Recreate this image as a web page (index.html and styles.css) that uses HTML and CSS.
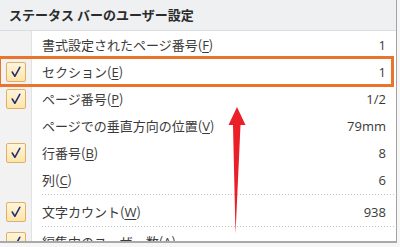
FILE: index.html
```html
<!DOCTYPE html>
<html lang="ja">
<head>
<meta charset="UTF-8">
<meta name="viewport" content="width=device-width, initial-scale=1.0">
<title>ステータス バーのユーザー設定</title>
<link rel="stylesheet" href="styles.css">
</head>
<body>
<div class="menu">
  <div class="title">ステータス バーのユーザー設定</div>
  <ul class="items">
    <li class="item">
      <span class="gutter"></span>
      <span class="label">書式設定されたページ番号(<u>F</u>)</span>
      <span class="value">1</span>
    </li>
    <li class="item marked">
      <span class="gutter"><span class="check"><svg viewBox="0 0 19 19"><path d="M5.5 9.5 L8.3 14 L13.5 4.5"/></svg></span></span>
      <span class="label">セクション(<u>E</u>)</span>
      <span class="value">1</span>
    </li>
    <li class="item">
      <span class="gutter"><span class="check"><svg viewBox="0 0 19 19"><path d="M5.5 9.5 L8.3 14 L13.5 4.5"/></svg></span></span>
      <span class="label">ページ番号(<u>P</u>)</span>
      <span class="value">1/2</span>
    </li>
    <li class="item">
      <span class="gutter"></span>
      <span class="label">ページでの垂直方向の位置(<u>V</u>)</span>
      <span class="value">79mm</span>
    </li>
    <li class="item">
      <span class="gutter"><span class="check"><svg viewBox="0 0 19 19"><path d="M5.5 9.5 L8.3 14 L13.5 4.5"/></svg></span></span>
      <span class="label">行番号(<u>B</u>)</span>
      <span class="value">8</span>
    </li>
    <li class="item">
      <span class="gutter"></span>
      <span class="label">列(<u>C</u>)</span>
      <span class="value">6</span>
    </li>
    <li class="sep"></li>
    <li class="item">
      <span class="gutter"><span class="check"><svg viewBox="0 0 19 19"><path d="M5.5 9.5 L8.3 14 L13.5 4.5"/></svg></span></span>
      <span class="label">文字カウント(<u>W</u>)</span>
      <span class="value">938</span>
    </li>
    <li class="sep short"></li>
    <li class="item">
      <span class="gutter"><span class="check"><svg viewBox="0 0 19 19"><path d="M5.5 9.5 L8.3 14 L13.5 4.5"/></svg></span></span>
      <span class="label">編集中のユーザー数(<u>A</u>)</span>
      <span class="value"></span>
    </li>
  </ul>
</div>
<svg class="arrow" width="400" height="247" viewBox="0 0 400 247">
  <path d="M237 107 L245.5 125 L240.5 125 L235.5 234 L233 125 L228.5 125 Z" fill="#ea1f27"/>
</svg>
</body>
</html>
```

FILE: styles.css
```css
body {
  margin: 0;
  background: #f6f6f6;
  font-family: "Open Sans", "Noto Sans CJK JP", sans-serif;
  font-size: 13px;
  color: #3a3a3a;
  position: relative;
  height: 247px;
  overflow: hidden;
}
.menu {
  width: 396px;
  height: 241px;
  background: #fff;
  border-right: 1px solid #a3a3a3;
  border-bottom: 2px solid #a9a9a9;
  overflow: hidden;
}
.title {
  height: 30px;
  line-height: 30px;
  padding-left: 9px;
  background: #eef0f2;
  border-bottom: 1px solid #dadcde;
  font-family: "Noto Sans CJK JP", sans-serif;
  font-weight: bold;
  color: #2b2b2b;
}
.items {
  list-style: none;
  margin: 0;
  padding: 0;
  background: linear-gradient(to right, #f2f2f2 0 31px, #e1e2e2 31px 32px, #fff 32px);
}
.item {
  display: grid;
  grid-template-columns: 32px 1fr auto;
  align-items: center;
  height: 27px;
  padding-right: 10px;
  position: relative;
}
.item u {
  text-decoration-thickness: 1px;
  text-underline-offset: 2px;
  font-family: "Open Sans", sans-serif;
}
.label {
  padding-left: 10px;
  font-family: "Noto Sans CJK JP", sans-serif;
  white-space: nowrap;
}
.value {
  text-align: right;
}
.gutter {
  display: flex;
  align-items: center;
  padding-left: 6px;
}
.check {
  width: 20px;
  height: 20px;
  box-sizing: border-box;
  border: 1px solid #e0b06a;
  border-radius: 2px;
  background: linear-gradient(#fff5da, #fde5a9);
}
.check svg {
  display: block;
  width: 18px;
  height: 18px;
}
.check path {
  fill: none;
  stroke: #1f2b78;
  stroke-width: 1.6;
  stroke-linecap: round;
  stroke-linejoin: round;
}
.marked::after {
  content: "";
  position: absolute;
  left: -2px;
  right: 2px;
  top: -2px;
  bottom: -2px;
  border: 3px solid #e9742c;
}
.sep {
  height: 5px;
  margin-left: 42px;
  margin-right: 2px;
  background: linear-gradient(to right, #c4c4c4 1px, transparent 1px) 0 1px / 3px 1px repeat-x;
}
.sep.short {
  height: 3px;
}
.arrow {
  position: absolute;
  left: 0;
  top: 0;
}
```
